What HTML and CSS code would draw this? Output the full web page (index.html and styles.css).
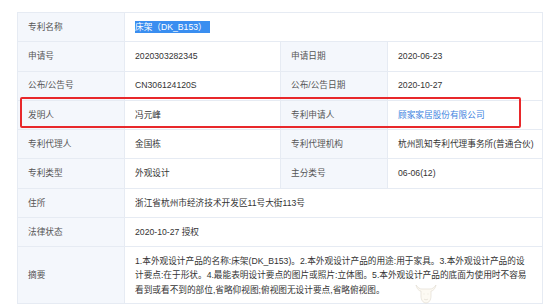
FILE: index.html
```html
<!DOCTYPE html>
<html lang="zh-CN">
<head>
    <meta charset="UTF-8">
    <meta name="viewport" content="width=device-width, initial-scale=1.0">
    <title>专利信息</title>
    <link rel="stylesheet" href="styles.css">
</head>
<body>
    <div class="patent-wrap">
        <table class="patent-table">
            <colgroup>
                <col class="col-label">
                <col class="col-value">
                <col class="col-label">
                <col class="col-value-last">
            </colgroup>
            <tr>
                <td class="label">专利名称</td>
                <td colspan="3"><span class="selected">床架（DK_B153）</span></td>
            </tr>
            <tr>
                <td class="label">申请号</td>
                <td>2020303282345</td>
                <td class="label">申请日期</td>
                <td>2020-06-23</td>
            </tr>
            <tr>
                <td class="label">公布/公告号</td>
                <td>CN306124120S</td>
                <td class="label">公布/公告日期</td>
                <td>2020-10-27</td>
            </tr>
            <tr>
                <td class="label">发明人</td>
                <td>冯元峰</td>
                <td class="label">专利申请人</td>
                <td><a class="link" href="#">顾家家居股份有限公司</a></td>
            </tr>
            <tr>
                <td class="label">专利代理人</td>
                <td>金国栋</td>
                <td class="label">专利代理机构</td>
                <td>杭州凯知专利代理事务所(普通合伙)</td>
            </tr>
            <tr>
                <td class="label">专利类型</td>
                <td>外观设计</td>
                <td class="label">主分类号</td>
                <td>06-06(12)</td>
            </tr>
            <tr>
                <td class="label">住所</td>
                <td colspan="3">浙江省杭州市经济技术开发区11号大街113号</td>
            </tr>
            <tr>
                <td class="label">法律状态</td>
                <td colspan="3">2020-10-27 授权</td>
            </tr>
            <tr class="abstract">
                <td class="label">摘要</td>
                <td colspan="3" class="abstract-text">1.本外观设计产品的名称:床架(DK_B153)。2.本外观设计产品的用途:用于家具。3.本外观设计产品的设计要点:在于形状。4.最能表明设计要点的图片或照片:立体图。5.本外观设计产品的底面为使用时不容易看到或看不到的部位,省略仰视图;俯视图无设计要点,省略俯视图。</td>
            </tr>
        </table>

        <!-- 高亮框 -->
        <div class="highlight-box"></div>

        <!-- 水印 -->
        <svg class="watermark" width="24" height="22" viewBox="0 0 24 22">
            <path d="M2 3 C4 6 6 7 8 7 L16 7 C18 7 20 6 22 3 C21 7 19 9 17 9 L17 14 C17 18 15 21 12 21 C9 21 7 18 7 14 L7 9 C5 9 3 7 2 3 Z" fill="#fdfaf3" stroke="#e2ddd3" stroke-width="0.7"/>
            <path d="M9.5 12 L10.5 12 M13.5 12 L14.5 12 M10 17 C11 18 13 18 14 17" stroke="#e2ddd3" stroke-width="0.7" fill="none"/>
        </svg>
    </div>
</body>
</html>
```

FILE: styles.css
```css
* {
    margin: 0;
    padding: 0;
    box-sizing: border-box;
}

body {
    font-family: "Liberation Sans", "Noto Sans CJK SC", sans-serif;
    background: #fff;
    color: #333;
    font-size: 8.67px;
}

.patent-wrap {
    position: relative;
    width: 525px;
    margin: 12px 0 0 17px;
}

.patent-table {
    width: 525px;
    border-collapse: collapse;
    table-layout: fixed;
    border: 1px solid #e6ebf3;
}

.col-label {
    width: 107px;
}

.col-value {
    width: 156px;
}

.col-value-last {
    width: 155px;
}

.patent-table td {
    height: 29.3px;
    padding: 0 9px 0 10px;
    border: 1px solid #e6ebf3;
    vertical-align: middle;
    line-height: 14.5px;
    color: #333;
    white-space: nowrap;
}

.patent-table td.label {
    background: #f4f7fc;
    color: #555;
}

.abstract td {
    height: 57px;
    padding-top: 6px;
    padding-bottom: 6px;
    white-space: normal;
}

.patent-table td.abstract-text {
    padding-right: 12px;
}

.selected {
    background: #3a8ef0;
    color: #fff;
    padding: 1px 3px 1px 0;
}

.link {
    color: #3b7fe0;
    text-decoration: none;
}

.highlight-box {
    position: absolute;
    left: 3px;
    top: 85px;
    width: 501px;
    height: 31px;
    border: 2px solid #e8282b;
    border-radius: 2px;
}

.watermark {
    position: absolute;
    left: 397px;
    top: 270px;
}
```
